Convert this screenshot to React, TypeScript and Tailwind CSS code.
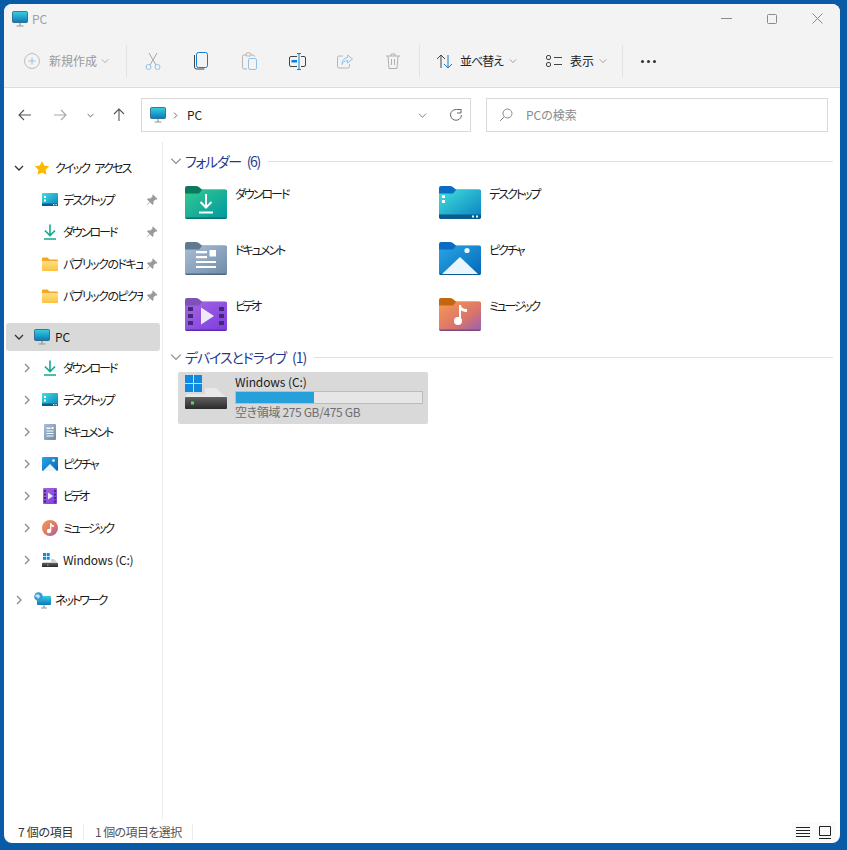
import React from "react";

const C = ({ d = "right", c = "#6b6b6b", s = 10, w = 1.3 }: { d?: "right" | "down"; c?: string; s?: number; w?: number }) => (
  <svg width={s} height={s} viewBox="0 0 10 10" fill="none" stroke={c} strokeWidth={w} className="shrink-0">
    {d === "right" ? <path d="M3 1l4 4-4 4" /> : <path d="M1 3l4 4 4-4" />}
  </svg>
);

const Defs = () => (
  <svg width="0" height="0" className="block h-0 w-0">
    <defs>
      <linearGradient id="gGreen" x1="0" y1="0" x2="1" y2="1"><stop offset="0" stopColor="#35c98f" /><stop offset="1" stopColor="#0098a0" /></linearGradient>
      <linearGradient id="gDoc" x1="0" y1="0" x2="1" y2="1"><stop offset="0" stopColor="#a9bdd6" /><stop offset="1" stopColor="#6f8ba8" /></linearGradient>
      <linearGradient id="gVid" x1="0" y1="0" x2="1" y2="1"><stop offset="0" stopColor="#a765e0" /><stop offset="1" stopColor="#7b3de0" /></linearGradient>
      <linearGradient id="gDesk" x1="0" y1="0" x2="1" y2="1"><stop offset="0" stopColor="#3fe0dc" /><stop offset="1" stopColor="#0a7fc0" /></linearGradient>
      <linearGradient id="gPic" x1="0" y1="0" x2="1" y2="1"><stop offset="0" stopColor="#29a6e6" /><stop offset="1" stopColor="#0468b8" /></linearGradient>
      <linearGradient id="gMus" x1="0" y1="0" x2="1" y2="1"><stop offset="0" stopColor="#f79a50" /><stop offset="0.6" stopColor="#d9746c" /><stop offset="1" stopColor="#9560b8" /></linearGradient>
      <linearGradient id="gMon" x1="0" y1="0" x2="0" y2="1"><stop offset="0" stopColor="#38cfe0" /><stop offset="1" stopColor="#0a78b8" /></linearGradient>
      <linearGradient id="gYel" x1="0" y1="0" x2="0" y2="1"><stop offset="0" stopColor="#ffe08a" /><stop offset="1" stopColor="#fcc23f" /></linearGradient>
      <linearGradient id="gDrive" x1="0" y1="0" x2="0" y2="1"><stop offset="0" stopColor="#606060" /><stop offset="1" stopColor="#2a2a2a" /></linearGradient>
    </defs>
  </svg>
);

const Folder = ({ fill, tab, edge, children }: { fill: string; tab: string; edge: string; children?: React.ReactNode }) => (
  <svg width="42" height="34" viewBox="0 0 42 34" className="shrink-0">
    <path d="M0 3a2 2 0 012-2h9c2 0 3 1 4 2l2 1.500h23a2 2 0 012 2V10H0z" fill={tab} />
    <path d="M0 8.500h14l3-3.500h23a2 2 0 012 2v25a2 2 0 01-2 2H2a2 2 0 01-2-2z" fill={fill} />
    <path d="M0 32.500h42a2 2 0 01-2 1.500H2a2 2 0 01-2-1.500z" fill={edge} />
    {children}
  </svg>
);

const FolderDownload = () => (
  <Folder fill="url(#gGreen)" tab="#0a7a5e" edge="#0a6f70">
    <path d="M21 9v13.500M15.500 17l5.500 5.500 5.500-5.500M14 27.500h14" stroke="#fff" strokeWidth="2" fill="none" />
  </Folder>
);
const FolderDoc = () => (
  <Folder fill="url(#gDoc)" tab="#5f7a8e" edge="#4f6a80">
    <path d="M11 10h11v2.200H11zM11 15h11v2.200H11zM11 20h20v2H11zM11 25h20v2H11z" fill="#fff" />
    <rect x="24.500" y="9" width="6.500" height="6.500" fill="#fff" />
  </Folder>
);
const FolderVideo = () => (
  <Folder fill="url(#gVid)" tab="#7d52b8" edge="#5d2bb0">
    <path d="M16 10.500l13 8.500-13 8.500z" fill="#f0eaf8" />
    <path d="M3 10h5v4H3zM3 17h5v4H3zM3 24h5v4H3zM34 10h5v4h-5zM34 17h5v4h-5zM34 24h5v4h-5z" fill="#3f2a78" />
  </Folder>
);
const FolderDesktop = () => (
  <Folder fill="url(#gDesk)" tab="#0a6cc4" edge="#0a5a90">
    <rect x="3" y="10" width="3" height="3" fill="#fff" />
    <rect x="3" y="15" width="3" height="3" fill="#fff" />
    <rect x="0" y="29.500" width="42" height="3.500" fill="#0a5b90" />
    <rect x="33" y="30.500" width="2" height="2" fill="#dff" />
    <rect x="37" y="30.500" width="2" height="2" fill="#dff" />
  </Folder>
);
const FolderPic = () => (
  <Folder fill="url(#gPic)" tab="#0a6cc4" edge="#0a5a90">
    <path d="M3 33L21 16l18 17z" fill="#eaf5fd" />
    <circle cx="28" cy="9.500" r="2.600" fill="#eef8ff" />
  </Folder>
);
const FolderMusic = () => (
  <Folder fill="url(#gMus)" tab="#c4660e" edge="#7e4a7a">
    <path d="M20 8h2c0 3 3 4 6 4v3c-2.500 0-5-.6-6-2v11h-2z" fill="#fff" />
    <circle cx="19" cy="24" r="4" fill="#fff" />
  </Folder>
);

const Monitor = () => (
  <svg width="16" height="16" viewBox="0 0 16 16" className="shrink-0">
    <rect x="0.500" y="0.500" width="15" height="11" rx="1" fill="url(#gMon)" stroke="#1f5f80" strokeWidth="0.800" />
    <path d="M8 12v2.500M4.500 15h7" stroke="#8a97a3" strokeWidth="1.200" />
  </svg>
);
const Star = () => (
  <svg width="16" height="16" viewBox="0 0 16 16" className="shrink-0">
    <path d="M8 1l2.200 4.600 5 .7-3.600 3.500.9 5L8 12.400l-4.500 2.400.9-5L.8 6.300l5-.7z" fill="#fdb900" />
  </svg>
);
const SDesktop = () => (
  <svg width="16" height="14" viewBox="0 0 16 14" className="shrink-0">
    <rect x="0" y="0" width="16" height="13" rx="1" fill="url(#gDesk)" />
    <rect x="0" y="10.500" width="16" height="2.500" fill="#0a5b90" />
    <rect x="2" y="3" width="2" height="2" fill="#fff" />
    <rect x="2" y="6.500" width="2" height="2" fill="#fff" />
    <rect x="11" y="11" width="1.300" height="1.300" fill="#dff" />
    <rect x="13.500" y="11" width="1.300" height="1.300" fill="#dff" />
  </svg>
);
const SDownload = () => (
  <svg width="14" height="16" viewBox="0 0 14 16" className="shrink-0" fill="none" stroke="#12a88e" strokeWidth="1.600">
    <path d="M7 0.500v10.500M2 6.500l5 5 5-5M1 15h12" />
  </svg>
);
const SFolder = () => (
  <svg width="16" height="14" viewBox="0 0 16 14" className="shrink-0">
    <path d="M0 1.500A1 1 0 011 .5h4.500l2 2H15a1 1 0 011 1v1H0z" fill="#f2a921" />
    <path d="M0 4h16v9a1 1 0 01-1 1H1a1 1 0 01-1-1z" fill="url(#gYel)" />
  </svg>
);
const SDoc = () => (
  <svg width="14" height="16" viewBox="0 0 14 16" className="shrink-0">
    <rect x="1" y="0" width="12" height="16" rx="1" fill="url(#gDoc)" />
    <path d="M3.500 3.500h4v1.500h-4zM3.500 6.500h7v1h-7zM3.500 9h7v1h-7zM3.500 11.500h7v1h-7z" fill="#fff" />
    <rect x="8.500" y="3" width="2" height="2" fill="#fff" />
  </svg>
);
const SPic = () => (
  <svg width="16" height="14" viewBox="0 0 16 14" className="shrink-0">
    <rect width="16" height="14" rx="1" fill="url(#gPic)" />
    <path d="M1 14l7-7 7 7z" fill="#eaf5fd" />
    <circle cx="11.500" cy="3.500" r="1.300" fill="#fff" />
  </svg>
);
const SVid = () => (
  <svg width="14" height="16" viewBox="0 0 14 16" className="shrink-0">
    <rect width="14" height="16" rx="1" fill="url(#gVid)" />
    <path d="M5 4.500l5 3.500-5 3.500z" fill="#f0eaf8" />
    <path d="M1 2h2v2H1zM1 5.500h2v2H1zM1 9h2v2H1zM1 12.500h2v2H1zM11 2h2v2h-2zM11 5.500h2v2h-2zM11 9h2v2h-2zM11 12.500h2v2h-2z" fill="#3f2a78" />
  </svg>
);
const SMus = () => (
  <svg width="16" height="16" viewBox="0 0 16 16" className="shrink-0">
    <circle cx="8" cy="8" r="8" fill="url(#gMus)" />
    <path d="M8 3h1.300c0 1.500 1.500 2.300 2.700 2.300v1.700c-1 0-2-.4-2.700-1V11H8z" fill="#fff" />
    <circle cx="7" cy="11" r="2.200" fill="#fff" />
  </svg>
);
const SDrive = () => (
  <svg width="16" height="16" viewBox="0 0 16 16" className="shrink-0">
    <path d="M1 1h3v3H1zM4.700 1h3v3h-3zM1 4.700h3v3H1zM4.700 4.700h3v3h-3z" fill="#0a8ae0" />
    <path d="M9 7h3l4 4H0l1-1h8z" fill="#cfd3d6" />
    <rect x="0" y="11" width="16" height="4" rx="0.500" fill="url(#gDrive)" />
    <rect x="5" y="12.500" width="1.500" height="1.200" fill="#4ce04c" />
  </svg>
);
const SNet = () => (
  <svg width="17" height="17" viewBox="0 0 17 17" className="shrink-0">
    <rect x="3" y="4" width="14" height="9" rx="1" fill="url(#gMon)" />
    <path d="M10 13v2.500M7 16h6" stroke="#8a97a3" strokeWidth="1.200" />
    <circle cx="4.500" cy="4.500" r="4.300" fill="#3a9ad8" />
    <path d="M2 2.500h3l1 2-2 2.500-1-2-2-.5z" fill="#c7e6f7" />
  </svg>
);
const Pin = () => (
  <svg width="12" height="12" viewBox="0 0 12 12" className="shrink-0">
    <path d="M7 .5l4.500 4.500-1.200.8-.9-.4-2 2.200.2 2L6.500 11 4 8.300 1 11.200.7 11l2.800-3.200L1 5.400l1.300-1.100 2 .2 2.200-2-.3-1z" fill="#9a9a9a" />
  </svg>
);

const Cut = () => (
  <svg width="16" height="18" viewBox="0 0 16 18" fill="none" className="shrink-0">
    <path d="M4 1l7 12M12 1L5 13" stroke="#a6a6a6" strokeWidth="1" />
    <circle cx="3.500" cy="15" r="2.500" stroke="#8cc4ee" />
    <circle cx="12.500" cy="15" r="2.500" stroke="#8cc4ee" />
  </svg>
);
const Copy = () => (
  <svg width="14" height="18" viewBox="0 0 14 18" fill="none" className="shrink-0">
    <rect x="2.500" y="0.500" width="11" height="15" rx="2" stroke="#0a7ed8" />
    <path d="M0.500 3v12a2 2 0 002 2h8" stroke="#444" />
  </svg>
);
const Paste = () => (
  <svg width="15" height="18" viewBox="0 0 15 18" fill="none" className="shrink-0">
    <path d="M4 3H2a1.500 1.500 0 00-1.500 1.500v11A1.500 1.500 0 002 17h3M9 3h2a1.500 1.500 0 011.500 1.500V5" stroke="#b5b5b5" />
    <rect x="4" y="1" width="5" height="3" rx="1" stroke="#b5b5b5" />
    <rect x="6.500" y="6.500" width="8" height="11" rx="1.500" stroke="#8cc4ee" />
  </svg>
);
const Rename = () => (
  <svg width="17" height="17" viewBox="0 0 17 17" fill="none" className="shrink-0">
    <path d="M8 3.500H2A1.500 1.500 0 00.500 5v7A1.500 1.500 0 002 13.500h6M12 3.500h3A1.500 1.500 0 0116.500 5v7a1.500 1.500 0 01-1.500 1.500h-3" stroke="#444" />
    <path d="M8 .5h4M10 .5v16M8 16.500h4" stroke="#0a7ed8" />
    <rect x="2.500" y="7" width="5.500" height="2.500" fill="#0a7ed8" />
  </svg>
);
const Share = () => (
  <svg width="16" height="15" viewBox="0 0 16 15" fill="none" className="shrink-0">
    <path d="M6 2H2a1.500 1.500 0 00-1.500 1.500v9A1.500 1.500 0 002 14h9a1.500 1.500 0 001.500-1.500V10" stroke="#b5b5b5" />
    <path d="M10.500 1l5 4-5 4V6.500c-3 0-4.500 1.500-5.500 4 0-4 2-6.500 5.500-7z" stroke="#8cc4ee" />
  </svg>
);
const Trash = () => (
  <svg width="14" height="16" viewBox="0 0 14 16" fill="none" stroke="#b0b0b0" className="shrink-0">
    <path d="M0 3h14M5 3V1h4v2M2 3l1 12.500h8L12 3M5.500 6v6M8.500 6v6" />
  </svg>
);
const Plus = () => (
  <svg width="16" height="16" viewBox="0 0 16 16" fill="none" className="shrink-0">
    <circle cx="8" cy="8" r="7.500" stroke="#bdbdbd" />
    <path d="M8 4.500v7M4.500 8h7" stroke="#8cc4ee" />
  </svg>
);
const Sort = () => (
  <svg width="17" height="15" viewBox="0 0 17 15" fill="none" className="shrink-0">
    <path d="M5 14V1M1 5l4-4 4 4" stroke="#444" />
    <path d="M12 1v13M8 10l4 4 4-4" stroke="#0a7ed8" />
  </svg>
);
const View = () => (
  <svg width="16" height="12" viewBox="0 0 16 12" fill="none" stroke="#444" className="shrink-0">
    <rect x="0.500" y="0.500" width="4" height="4" rx="1.500" />
    <rect x="0.500" y="7.500" width="4" height="4" rx="1.500" />
    <path d="M8 2.500h8M8 9.500h8" />
  </svg>
);
const Arrow = ({ d, c }: { d: string; c: string }) => (
  <svg width="14" height="14" viewBox="0 0 14 14" fill="none" stroke={c} strokeWidth="1.100" className="shrink-0">
    <path d={d} />
  </svg>
);

const TB = ({ children }: { children: React.ReactNode }) => (
  <div className="flex h-8 w-12 shrink-0 items-center justify-center">{children}</div>
);
const Sep = () => <div className="h-8 w-px shrink-0 bg-[#e2e2e2]" />;

const Row = ({ indent, icon, label, pin, chev, w, t }: { indent: "top" | "sub"; icon: React.ReactNode; label: string; pin?: boolean; chev?: "right" | "down" | null; w?: string; t?: string }) => (
  <div className="flex h-8 items-center">
    <div className={indent === "top" ? "flex w-[20px] shrink-0 justify-end" : "flex w-[28px] shrink-0 justify-end"}>
      {chev ? <C d={chev} c={chev === "down" ? "#333" : "#8a8a8a"} /> : null}
    </div>
    <div className="flex w-[28px] shrink-0 justify-center pl-[8px]">{icon}</div>
    <div className={`ml-[3px] overflow-hidden whitespace-nowrap text-[12px] leading-4 text-[#1a1a1a] ${w ?? "w-[84px]"} ${t ?? "tracking-[-2px]"}`}>{label}</div>
    {pin ? <div className="ml-[1px] flex w-[16px] justify-center"><Pin /></div> : null}
  </div>
);

const Item = ({ icon, label, t }: { icon: React.ReactNode; label: string; t?: string }) => (
  <div className="flex h-[56px] w-[254px] gap-2 pl-[7px] pt-[1px]">
    {icon}
    <div className={`pt-[1px] text-[12px] leading-4 text-[#1a1a1a] ${t ?? "tracking-[-2px]"}`}>{label}</div>
  </div>
);

const Section = ({ label, t }: { label: string; t: string }) => (
  <div className="flex h-5 items-center">
    <C d="down" c="#8a8a8a" s={12} w={1} />
    <span className={`ml-[3px] whitespace-nowrap text-[14px] leading-5 text-[#1f3a8f] ${t}`}>{label}</span>
    <div className="ml-2 h-px flex-1 bg-[#e0e0e0]" />
  </div>
);

export default function App() {
  return (
    <div className="h-[850px] w-[847px] bg-[#0a5ba6] pb-[7px] pl-1 pr-[7px] pt-1 font-['Noto_Sans_CJK_JP','Noto_Sans',sans-serif] [font-feature-settings:'palt']">
      <Defs />
      <div className="flex h-[839px] w-[836px] flex-col overflow-hidden rounded-lg bg-white">
        <div className="flex h-[84px] shrink-0 flex-col border-b border-[#dcdcdc] bg-[#f3f3f3]">
          <div className="flex h-[29px] shrink-0 items-center pl-[8px]">
            <Monitor />
            <span className="ml-[4px] text-[12px] text-[#a0a0a0]">PC</span>
            <div className="ml-auto flex items-center">
              <div className="flex w-[45px] justify-center"><svg width="11" height="11" viewBox="0 0 11 11" stroke="#8a8a8a"><path d="M0 5.500h11" /></svg></div>
              <div className="flex w-[45px] justify-center"><svg width="10" height="10" viewBox="0 0 10 10" fill="none" stroke="#8a8a8a"><rect x="0.500" y="0.500" width="9" height="9" rx="1" /></svg></div>
              <div className="flex w-[46px] justify-center"><svg width="11" height="11" viewBox="0 0 11 11" stroke="#8a8a8a"><path d="M.5.500l10 10M10.500.500l-10 10" /></svg></div>
            </div>
          </div>
          <div className="mt-[12px] flex h-8 items-center">
            <div className="flex w-[122px] shrink-0 items-center pl-5">
              <Plus />
              <span className="ml-[9px] whitespace-nowrap text-[12px] text-[#9a9a9a]">新規作成</span>
              <span className="ml-[4px]"><C d="down" c="#9a9a9a" s={8} w={1} /></span>
            </div>
            <Sep />
            <div className="ml-[2px] flex">
              <TB><Cut /></TB>
              <TB><Copy /></TB>
              <TB><Paste /></TB>
              <TB><Rename /></TB>
              <TB><Share /></TB>
              <TB><Trash /></TB>
            </div>
            <div className="ml-[2px]"><Sep /></div>
            <div className="flex w-[114px] shrink-0 items-center pl-4">
              <Sort />
              <span className="ml-[7px] whitespace-nowrap text-[12px] tracking-[-1px] text-[#222]">並べ替え</span>
              <span className="ml-[6px]"><C d="down" c="#8a8a8a" s={8} w={1} /></span>
            </div>
            <div className="flex w-[88px] shrink-0 items-center pl-[12px]">
              <View />
              <span className="ml-[8px] whitespace-nowrap text-[12px] text-[#222]">表示</span>
              <span className="ml-[5px]"><C d="down" c="#8a8a8a" s={8} w={1} /></span>
            </div>
            <Sep />
            <div className="flex w-[50px] justify-center gap-[3px]">
              <i className="h-[3px] w-[3px] rounded-full bg-[#333]" />
              <i className="h-[3px] w-[3px] rounded-full bg-[#333]" />
              <i className="h-[3px] w-[3px] rounded-full bg-[#333]" />
            </div>
          </div>
        </div>

        <div className="flex h-[54px] shrink-0 items-center pl-[14px]">
          <Arrow d="M13 7H1M6 2L1 7l5 5" c="#555" />
          <div className="ml-[21px]"><Arrow d="M1 7h12M8 2l5 5-5 5" c="#a8a8a8" /></div>
          <div className="ml-[20px]"><C d="down" c="#555" s={7} /></div>
          <div className="ml-[18px]"><Arrow d="M7 13V1M2 6l5-5 5 5" c="#555" /></div>
          <div className="ml-[15px] flex h-[34px] w-[330px] shrink-0 items-center border border-[#d9d9d9] bg-white pl-2">
            <Monitor />
            <span className="ml-[6px]"><C c="#555" s={7} w={1.2} /></span>
            <span className="ml-[8px] text-[12px] text-[#222]">PC</span>
            <span className="ml-auto"><C d="down" c="#777" s={9} w={1} /></span>
            <svg width="14" height="14" viewBox="0 0 14 14" fill="none" stroke="#666" className="ml-[22px] mr-[7px] shrink-0">
              <path d="M12.500 7A5.500 5.500 0 112 4.500 5.500 5.500 0 017.500 1.500H12M12 1v4H8" />
            </svg>
          </div>
          <div className="ml-[15px] flex h-[34px] w-[342px] shrink-0 items-center border border-[#d9d9d9] bg-white pl-[12px]">
            <svg width="14" height="14" viewBox="0 0 14 14" fill="none" stroke="#888" className="shrink-0">
              <circle cx="8.500" cy="5.500" r="4.500" />
              <path d="M5 9l-4 4" />
            </svg>
            <span className="ml-[13px] text-[12px] text-[#8a8a8a]">PCの検索</span>
          </div>
        </div>

        <div className="flex min-h-0 flex-1">
          <div className="flex w-[159px] shrink-0 flex-col border-r border-[#ececec] pt-[10px]">
            <Row indent="top" chev="down" icon={<Star />} label="クイック アクセス" w="w-[100px]" t="tracking-[-1.800px] [word-spacing:4px]" />
            <Row indent="sub" icon={<SDesktop />} label="デスクトップ" pin w="w-[80px]" />
            <Row indent="sub" icon={<SDownload />} label="ダウンロード" pin w="w-[80px]" />
            <Row indent="sub" icon={<SFolder />} label="パブリックのドキュメント" pin w="w-[80px]" t="tracking-[-1.500px]" />
            <Row indent="sub" icon={<SFolder />} label="パブリックのピクチャ" pin w="w-[80px]" t="tracking-[-1.500px]" />
            <div className="mx-[2px] mt-[11px] h-[28px] rounded-[3px] bg-[#d9d9d9]">
              <div className="flex h-[28px] items-center">
                <div className="flex w-[18px] shrink-0 justify-end"><C d="down" c="#333" /></div>
                <div className="flex w-[28px] shrink-0 justify-center pl-[8px]"><Monitor /></div>
                <div className="ml-[3px] text-[12px] leading-4 text-[#1a1a1a]">PC</div>
              </div>
            </div>
            <div className="mt-[1px]">
              <Row indent="sub" chev="right" icon={<SDownload />} label="ダウンロード" />
              <Row indent="sub" chev="right" icon={<SDesktop />} label="デスクトップ" />
              <Row indent="sub" chev="right" icon={<SDoc />} label="ドキュメント" />
              <Row indent="sub" chev="right" icon={<SPic />} label="ピクチャ" />
              <Row indent="sub" chev="right" icon={<SVid />} label="ビデオ" t="tracking-[-3px]" />
              <Row indent="sub" chev="right" icon={<SMus />} label="ミュージック" t="tracking-[-2.300px]" />
              <Row indent="sub" chev="right" icon={<SDrive />} label="Windows (C:)" t="tracking-[-0.200px]" />
              <div className="h-2" />
              <Row indent="top" chev="right" icon={<SNet />} label="ネットワーク" />
            </div>
          </div>

          <div className="min-w-0 flex-1 pl-[7px] pr-[7px] pt-[9px]">
            <Section label="フォルダー (6)" t="tracking-[-1.300px] [word-spacing:4px]" />
            <div className="mt-[13px] flex flex-wrap pl-[8px]">
              <Item icon={<FolderDownload />} label="ダウンロード" />
              <Item icon={<FolderDesktop />} label="デスクトップ" />
              <Item icon={<FolderDoc />} label="ドキュメント" />
              <Item icon={<FolderPic />} label="ピクチャ" />
              <Item icon={<FolderVideo />} label="ビデオ" t="tracking-[-3px]" />
              <Item icon={<FolderMusic />} label="ミュージック" t="tracking-[-2.300px]" />
            </div>
            <div className="-mt-[5px]"><Section label="デバイスとドライブ (1)" t="tracking-[-1.100px] [word-spacing:4px]" /></div>
            <div className="ml-[8px] mt-[5px] flex h-[52px] w-[250px] items-start rounded-[2px] bg-[#d9d9d9] pl-[7px] pt-[3px]">
              <svg width="42" height="36" viewBox="0 0 42 36" className="shrink-0">
                <path d="M0 0h8v8H0zM9 0h8v8H9zM0 9h8v8H0zM9 9h8v8H9z" fill="#0f8ae0" />
                <path d="M20 13h11l10 9H0l2-3h18z" fill="#e8e8e8" />
                <rect x="0" y="22" width="42" height="12" rx="1" fill="url(#gDrive)" />
                <rect x="6" y="26.500" width="3" height="3" fill="#47e047" />
              </svg>
              <div className="ml-2 w-[188px]">
                <div className="text-[12px] leading-[14px] tracking-[-0.100px] text-[#1a1a1a]">Windows (C:)</div>
                <div className="mt-[2px] h-[13px] w-[188px] border border-[#bcbcbc] bg-[#e6e6e6]">
                  <div className="h-full w-[78px] bg-[#26a0da]" />
                </div>
                <div className="whitespace-nowrap text-[12px] leading-[16px] tracking-[-0.350px] text-[#6d6d6d]">空き領域 275 GB/475 GB</div>
              </div>
            </div>
          </div>
        </div>

        <div className="flex h-[24px] shrink-0 items-center pl-[14px] pr-1 pt-[2px] text-[12px]">
          <span className="w-[65px] whitespace-nowrap tracking-[-0.300px] text-[#333]">7 個の項目</span>
          <i className="h-4 w-px bg-[#ececec]" />
          <span className="ml-[11px] w-[97px] whitespace-nowrap tracking-[-0.600px] text-[#555]">1 個の項目を選択</span>
          <i className="h-4 w-px bg-[#ececec]" />
          <div className="ml-auto flex">
            <div className="flex h-[20px] w-[22px] items-center justify-center bg-[#fafafa]">
              <svg width="14" height="14" viewBox="0 0 14 14" stroke="#222" className="shrink-0"><path d="M0 2.500h14M0 5.500h14M0 8.500h14M0 11.500h14" /></svg>
            </div>
            <div className="flex h-[20px] w-[22px] items-center justify-center bg-[#fafafa]">
              <svg width="14" height="14" viewBox="0 0 14 14" fill="none" stroke="#222" className="shrink-0"><path d="M1.500 1.500h11v9h-11zM1 13.500h12" /></svg>
            </div>
          </div>
        </div>
      </div>
    </div>
  );
}
